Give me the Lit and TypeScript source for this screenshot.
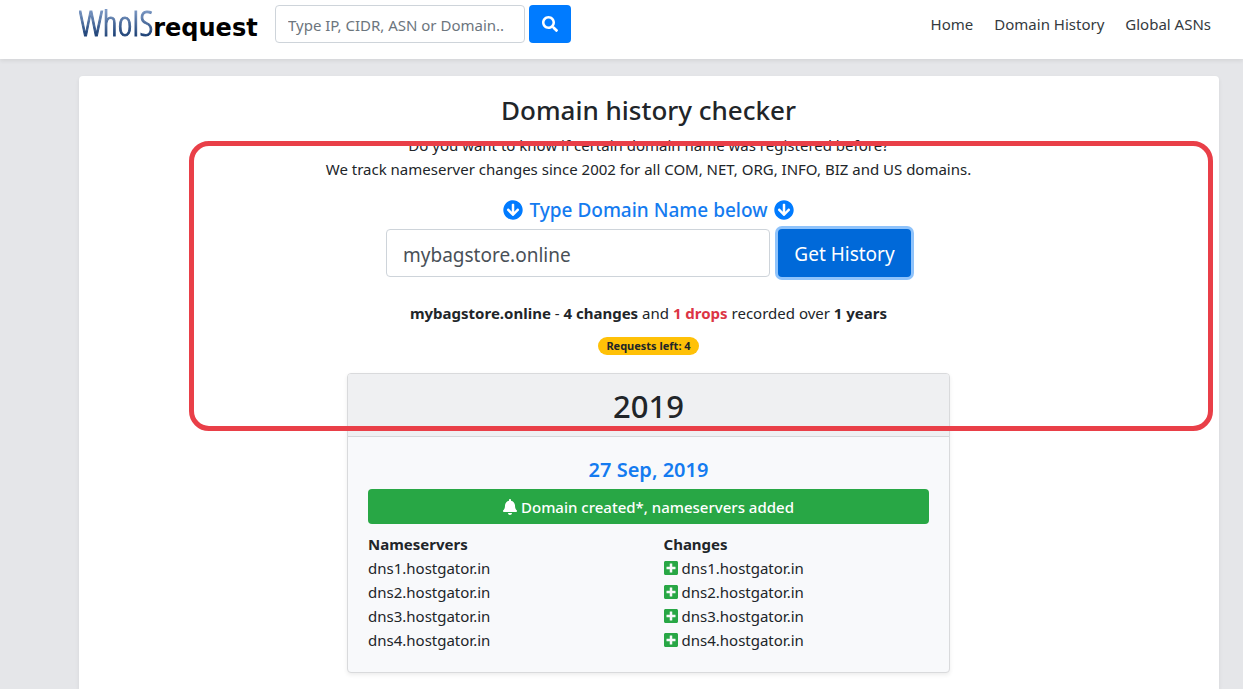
import { LitElement, html, css, svg } from "lit";
import { customElement, property, state } from "lit/decorators.js";

const ICONS: Record<string, { box: string; path: string }> = {
  search: {
    box: "0 0 512 512",
    path: "M505 442.700 405.300 343c-4.500-4.500-10.600-7-17-7H372c27.600-35.300 44-79.700 44-128C416 93.100 322.900 0 208 0S0 93.100 0 208s93.100 208 208 208c48.300 0 92.700-16.400 128-44v16.300c0 6.400 2.500 12.500 7 17l99.700 99.700c9.400 9.400 24.600 9.400 33.900 0l28.300-28.300c9.400-9.400 9.400-24.600.1-34zM208 336c-70.700 0-128-57.200-128-128 0-70.700 57.200-128 128-128 70.700 0 128 57.200 128 128 0 70.700-57.200 128-128 128z",
  },
  down: {
    box: "0 0 512 512",
    path: "M504 256c0 137-111 248-248 248S8 393 8 256 119 8 256 8s248 111 248 248zm-143.600-28.900L288 302.600V120c0-13.300-10.700-24-24-24h-16c-13.300 0-24 10.700-24 24v182.600l-72.400-75.500c-9.300-9.700-24.800-9.900-34.300-.4l-10.900 11c-9.400 9.400-9.400 24.600 0 33.900L239 404.300c9.400 9.400 24.600 9.400 33.900 0l132.700-132.700c9.400-9.400 9.400-24.600 0-33.900l-10.900-11c-9.500-9.500-25-9.300-34.300.4z",
  },
  bell: {
    box: "0 0 448 512",
    path: "M224 512c35.320 0 63.970-28.650 63.970-64H160.030c0 35.350 28.650 64 63.970 64zm215.390-149.710c-19.320-20.760-55.470-51.990-55.470-154.290 0-77.700-54.480-139.900-127.940-155.160V32c0-17.670-14.320-32-31.980-32s-31.980 14.330-31.980 32v20.840C118.560 68.100 64.080 130.300 64.080 208c0 102.300-36.150 133.530-55.470 154.290-6 6.450-8.660 14.160-8.610 21.710.11 16.400 12.980 32 32.100 32h383.800c19.120 0 32-15.600 32.100-32 .05-7.550-2.610-15.270-8.610-21.710z",
  },
  plus: {
    box: "0 0 448 512",
    path: "M400 32H48C21.500 32 0 53.500 0 80v352c0 26.500 21.500 48 48 48h352c26.500 0 48-21.500 48-48V80c0-26.500-21.500-48-48-48zm-32 252c0 6.600-5.400 12-12 12h-92v92c0 6.600-5.400 12-12 12h-56c-6.600 0-12-5.400-12-12v-92H92c-6.600 0-12-5.400-12-12v-56c0-6.600 5.400-12 12-12h92v-92c0-6.600 5.400-12 12-12h56c6.600 0 12 5.400 12 12v92h92c6.600 0 12 5.400 12 12v56z",
  },
};

@customElement("app-icon")
export class AppIcon extends LitElement {
  @property() name = "search";

  static styles = css`
    :host { display: inline-flex; }
    .glyph { display: block; height: 1em; width: auto; fill: currentColor; }
  `;

  render() {
    const icon = ICONS[this.name];
    return html`<svg class="glyph" viewBox=${icon.box} aria-hidden="true">${svg`<path d=${icon.path}></path>`}</svg>`;
  }
}

@customElement("site-header")
export class SiteHeader extends LitElement {
  static styles = css`
    :host { display: block; }
    .bar {
      display: flex; align-items: center; min-height: 59px; padding: 0 32px 11px 79px;
      box-sizing: border-box; background: #fff; position: relative;
      box-shadow: 0 2px 4px rgba(0, 0, 0, 0.075);
    }
    .logo { display: flex; align-items: baseline; width: 196px; flex: none; line-height: 40px; padding-top: 2px; text-decoration: none; }
    .who {
      font-family: "Open Sans Condensed Light", "Open Sans Condensed", "Noto Sans Condensed", "DejaVu Sans Condensed", sans-serif;
      font-size: 35px; font-weight: 300; -webkit-text-stroke: 1px transparent;
      background: linear-gradient(#7d9ac6 15%, #1e4277 80%); background-clip: text; -webkit-background-clip: text; color: transparent;
    }
    .request { font-family: "DejaVu Sans", sans-serif; font-weight: 700; font-size: 24px; color: #000; }
    .search { display: flex; gap: 4px; }
    .field {
      width: 250px; height: 38px; box-sizing: border-box; padding: 2px 12px 0; border: 1px solid #ced4da;
      border-radius: 4px; font: inherit; color: #495057; background: #fff;
    }
    .field::placeholder { color: #6c757d; opacity: 1; }
    .go {
      display: flex; align-items: center; justify-content: center; width: 42px; height: 38px; padding: 0;
      border: 0; border-radius: 4px; background: #007bff; color: #fff; font-size: 16px;
    }
    .nav { display: flex; gap: 21px; margin-left: auto; }
    .link { color: #343a40; text-decoration: none; white-space: nowrap; }
  `;

  render() {
    return html`
      <header class="bar">
        <a class="logo" href="#"><span class="who">WhoIS</span><span class="request">request</span></a>
        <form class="search" @submit=${(e: Event) => e.preventDefault()}>
          <input class="field" type="text" aria-label="Type IP, CIDR, ASN or Domain.." placeholder="Type IP, CIDR, ASN or Domain.." />
          <button class="go" type="submit" aria-label="Search"><app-icon name="search"></app-icon></button>
        </form>
        <nav class="nav">
          ${["Home", "Domain History", "Global ASNs"].map((t) => html`<a class="link" href="#">${t}</a>`)}
        </nav>
      </header>
    `;
  }
}

@customElement("history-card")
export class HistoryCard extends LitElement {
  @property() year = "";
  @property() date = "";
  @property({ attribute: false }) servers: string[] = [];

  static styles = css`
    :host { display: block; width: 603px; max-width: 100%; }
    .card {
      border: 1px solid #d9dadc; border-radius: 4px; background: #f8f9fb; overflow: hidden;
      box-shadow: 0 2px 4px rgba(0, 0, 0, 0.075);
    }
    .year {
      margin: 0; padding: 13px 20px 11px; border-bottom: 1px solid #d5d6d9; background: #eff0f2;
      font-size: 31px; line-height: 38px; font-weight: 500; text-align: center;
    }
    .body { padding: 20px; }
    .date { margin: 0 0 7px; font-size: 20px; line-height: 25px; font-weight: 600; color: #147bf0; text-align: center; }
    .event {
      display: flex; align-items: center; justify-content: center; gap: 4px; min-height: 35px; margin-bottom: 8px;
      border-radius: 4px; background: #28a745; color: #fff; font-weight: 500;
    }
    .event app-icon { font-size: 16px; }
    .columns { display: grid; grid-template-columns: 1fr 1fr; gap: 30px; text-align: left; }
    .title { margin: 0; font-size: inherit; line-height: 24px; font-weight: 700; }
    .list { margin: 0; padding: 0; list-style: none; line-height: 24px; }
    .item { display: flex; align-items: center; gap: 4px; }
    .item app-icon { font-size: 16px; color: #28a745; }
  `;

  render() {
    return html`
      <section class="card">
        <h2 class="year">${this.year}</h2>
        <div class="body">
          <h3 class="date">${this.date}</h3>
          <div class="event"><app-icon name="bell"></app-icon><span>Domain created*, nameservers added</span></div>
          <div class="columns">
            <div>
              <h4 class="title">Nameservers</h4>
              <ul class="list">${this.servers.map((s) => html`<li class="item">${s}</li>`)}</ul>
            </div>
            <div>
              <h4 class="title">Changes</h4>
              <ul class="list">
                ${this.servers.map((s) => html`<li class="item"><app-icon name="plus"></app-icon><span>${s}</span></li>`)}
              </ul>
            </div>
          </div>
        </div>
      </section>
    `;
  }
}

@customElement("app-root")
export class AppRoot extends LitElement {
  @state() private domain = "mybagstore.online";

  static styles = css`
    :host {
      display: flex; flex-direction: column; min-height: 100vh; position: relative; background: #e5e6e9;
      font-family: "Noto Sans", "Open Sans", sans-serif; font-size: 15px; line-height: 24px; color: #212529;
    }
    .main { display: flex; flex: 1; padding: 17px 24px 0 79px; }
    .panel {
      display: flex; flex-direction: column; align-items: center; flex: 1; padding: 17px 21px 16px 20px;
      border-radius: 4px 4px 0 0; background: #fff; text-align: center;
      box-shadow: 0 2px 4px rgba(0, 0, 0, 0.075);
    }
    .heading { margin: 0 0 6px; font-size: 26px; line-height: 34px; font-weight: 500; }
    .intro { margin: 0 0 17px; }
    .prompt {
      display: flex; align-items: center; gap: 6px; margin-bottom: 7px;
      font-size: 19px; line-height: 24px; font-weight: 500; color: #147bf0;
    }
    .prompt app-icon { font-size: 20px; color: #007bff; }
    .lookup { display: flex; gap: 8px; margin-bottom: 24px; }
    .domain {
      width: 384px; height: 48px; box-sizing: border-box; padding: 4px 16px 0; border: 1px solid #ced4da;
      border-radius: 4px; background: #fff; color: #495057; font: inherit; font-size: 19px;
    }
    .submit {
      height: 48px; width: 133px; padding: 2px 0 0; border: 0; border-radius: 4px; background: #0069d9; color: #fff;
      font: inherit; font-size: 19px; white-space: nowrap; box-shadow: 0 0 0 3px #8fc3fb;
    }
    .summary { margin: 0 0 12px; }
    .drops { color: #dc3545; }
    .badge {
      margin-bottom: 18px; padding: 0 8px; border-radius: 9px; background: #ffc107;
      font-size: 11px; line-height: 18px; font-weight: 700;
    }
    .highlight {
      position: absolute; left: 189px; right: 30px; top: 141px; height: 290px; box-sizing: border-box;
      border: 5px solid #e93f48; border-radius: 20px; pointer-events: none;
    }
  `;

  render() {
    return html`
      <site-header></site-header>
      <main class="main">
        <div class="panel">
          <h1 class="heading">Domain history checker</h1>
          <p class="intro">
            Do you want to know if certain domain name was registered before?<br />
            We track nameserver changes since 2002 for all COM, NET, ORG, INFO, BIZ and US domains.
          </p>
          <label class="prompt" for="domain">
            <app-icon name="down"></app-icon><span>Type Domain Name below</span><app-icon name="down"></app-icon>
          </label>
          <form class="lookup" @submit=${(e: Event) => e.preventDefault()}>
            <input
              id="domain" class="domain" type="text" .value=${this.domain}
              @input=${(e: Event) => (this.domain = (e.target as HTMLInputElement).value)}
            />
            <button class="submit" type="submit">Get History</button>
          </form>
          <p class="summary">
            <b>mybagstore.online</b> - <b>4 changes</b> and <b class="drops">1 drops</b> recorded over <b>1 years</b>
          </p>
          <span class="badge">Requests left: 4</span>
          <history-card
            year="2019"
            date="27 Sep, 2019"
            .servers=${["dns1.hostgator.in", "dns2.hostgator.in", "dns3.hostgator.in", "dns4.hostgator.in"]}
          ></history-card>
        </div>
      </main>
      <div class="highlight"></div>
    `;
  }
}
